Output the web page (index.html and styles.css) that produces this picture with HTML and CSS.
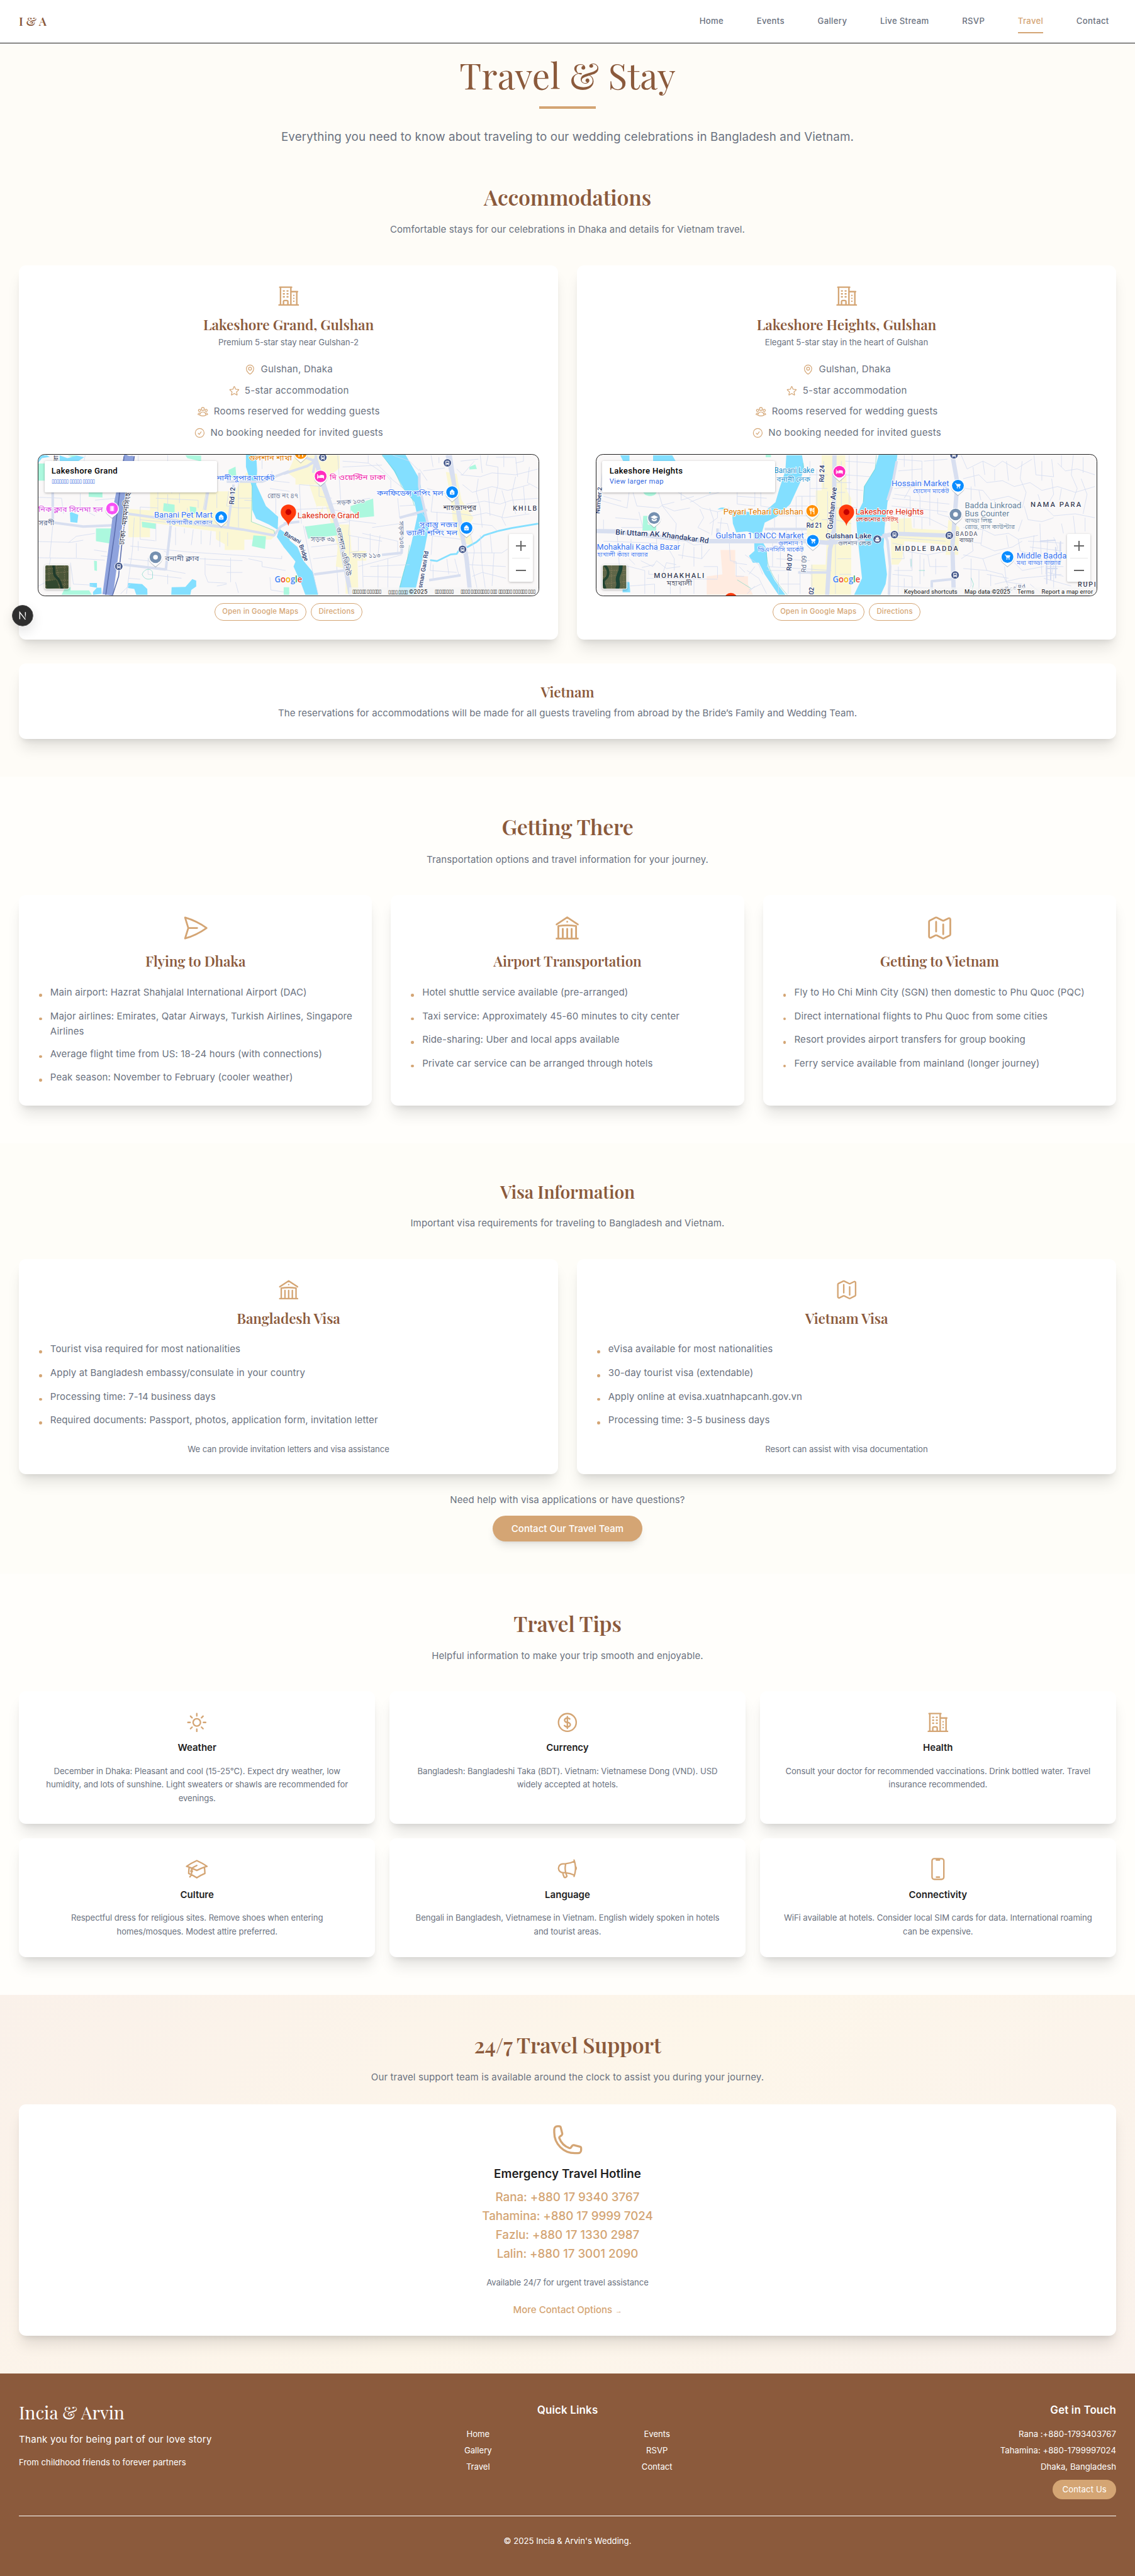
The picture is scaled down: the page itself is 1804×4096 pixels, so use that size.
FILE: index.html
```html
<!DOCTYPE html>
<html lang="en">
<head>
<meta charset="utf-8">
<title>Travel &amp; Stay | Incia &amp; Arvin</title>
<link rel="stylesheet" href="styles.css">
</head>
<body>
<svg class="sprite" aria-hidden="true">
  <symbol id="i-building" viewBox="0 0 24 24"><path d="M2.25 21h19.5m-18-18v18m10.5-18v18m6-13.5V21M6.75 6.75h.75m-.75 3h.75m-.75 3h.75m3-6h.75m-.75 3h.75m-.75 3h.75M6.75 21v-3.375c0-.621.504-1.125 1.125-1.125h2.25c.621 0 1.125.504 1.125 1.125V21M3 3h12m-.75 4.5H21m-3.75 3.75h.008v.008h-.008v-.008zm0 3h.008v.008h-.008v-.008zm0 3h.008v.008h-.008v-.008z"/></symbol>
  <symbol id="i-pin" viewBox="0 0 24 24"><path d="M15 10.5a3 3 0 11-6 0 3 3 0 016 0z"/><path d="M19.5 10.5c0 7.142-7.5 11.25-7.5 11.25S4.5 17.642 4.5 10.5a7.5 7.5 0 1115 0z"/></symbol>
  <symbol id="i-star" viewBox="0 0 24 24"><path d="M11.48 3.499a.562.562 0 011.04 0l2.125 5.111a.563.563 0 00.475.345l5.518.442c.499.04.701.663.321.988l-4.204 3.602a.563.563 0 00-.182.557l1.285 5.385a.562.562 0 01-.84.61l-4.725-2.885a.563.563 0 00-.586 0L6.982 20.54a.562.562 0 01-.84-.61l1.285-5.386a.562.562 0 00-.182-.557l-4.204-3.602a.563.563 0 01.321-.988l5.518-.442a.563.563 0 00.475-.345L11.48 3.5z"/></symbol>
  <symbol id="i-users" viewBox="0 0 24 24"><path d="M18 18.72a9.094 9.094 0 003.741-.479 3 3 0 00-4.682-2.72m.94 3.198l.001.031c0 .225-.012.447-.037.666A11.944 11.944 0 0112 21c-2.17 0-4.207-.576-5.963-1.584A6.062 6.062 0 016 18.719m12 0a5.971 5.971 0 00-.941-3.197m0 0A5.995 5.995 0 0012 12.75a5.995 5.995 0 00-5.058 2.772m0 0a3 3 0 00-4.681 2.72 8.986 8.986 0 003.74.477m.94-3.197a5.971 5.971 0 00-.94 3.197M15 6.75a3 3 0 11-6 0 3 3 0 016 0zm6 3a2.25 2.25 0 11-4.5 0 2.25 2.25 0 014.5 0zm-13.5 0a2.25 2.25 0 11-4.5 0 2.25 2.25 0 014.5 0z"/></symbol>
  <symbol id="i-check" viewBox="0 0 24 24"><path d="M9 12.75L11.25 15 15 9.75M21 12a9 9 0 11-18 0 9 9 0 0118 0z"/></symbol>
  <symbol id="i-plane" viewBox="0 0 24 24"><path d="M6 12L3.269 3.126A59.768 59.768 0 0121.485 12 59.77 59.77 0 013.27 20.876L5.999 12zm0 0h7.5"/></symbol>
  <symbol id="i-library" viewBox="0 0 24 24"><path d="M12 21v-8.25M15.75 21v-8.25M8.25 21v-8.25M3 9l9-6 9 6m-1.5 12V10.332A48.36 48.36 0 0012 9.75c-2.551 0-5.056.2-7.5.582V21M3 21h18M12 6.75h.008v.008H12V6.75z"/></symbol>
  <symbol id="i-map" viewBox="0 0 24 24"><path d="M9 6.75V15m6-6v8.25m.503 3.498l4.875-2.437c.381-.19.622-.58.622-1.006V4.82c0-.836-.88-1.38-1.628-1.006l-3.869 1.934c-.317.159-.69.159-1.006 0L9.503 3.252a1.125 1.125 0 00-1.006 0L3.622 5.689C3.24 5.88 3 6.27 3 6.695V19.18c0 .836.88 1.38 1.628 1.006l3.869-1.934c.317-.159.69-.159 1.006 0l4.994 2.497c.317.158.69.158 1.006 0z"/></symbol>
  <symbol id="i-sun" viewBox="0 0 24 24"><path d="M12 3v2.25m6.364.386l-1.591 1.591M21 12h-2.25m-.386 6.364l-1.591-1.591M12 18.75V21m-4.773-4.227l-1.591 1.591M5.25 12H3m4.227-4.773L5.636 5.636M15.75 12a3.75 3.75 0 11-7.5 0 3.75 3.75 0 017.5 0z"/></symbol>
  <symbol id="i-dollar" viewBox="0 0 24 24"><path d="M12 6v12m-3-2.818l.879.659c1.171.879 3.07.879 4.242 0 1.172-.879 1.172-2.303 0-3.182C13.536 12.219 12.768 12 12 12c-.725 0-1.45-.22-2.003-.659-1.106-.879-1.106-2.303 0-3.182s2.9-.879 4.006 0l.415.33M21 12a9 9 0 11-18 0 9 9 0 0118 0z"/></symbol>
  <symbol id="i-cap" viewBox="0 0 24 24"><path d="M4.26 10.147a60.436 60.436 0 00-.491 6.347A48.627 48.627 0 0112 20.904a48.627 48.627 0 018.232-4.41 60.46 60.46 0 00-.491-6.347m-15.482 0a50.57 50.57 0 00-2.658-.813A59.905 59.905 0 0112 3.493a59.902 59.902 0 0110.399 5.84c-.896.248-1.783.52-2.658.814m-15.482 0A50.697 50.697 0 0112 13.489a50.702 50.702 0 017.74-3.342M6.75 15a.75.75 0 100-1.5.75.75 0 000 1.5zm0 0v-3.675A55.378 55.378 0 0112 8.443m-7.007 11.55A5.981 5.981 0 006.75 15.75v-1.5"/></symbol>
  <symbol id="i-megaphone" viewBox="0 0 24 24"><path d="M10.34 15.84c-.688-.06-1.386-.09-2.09-.09H7.5a4.5 4.5 0 110-9h.75c.704 0 1.402-.03 2.09-.09m0 9.18c.253.962.584 1.892.985 2.783.247.55.06 1.21-.463 1.511l-.657.38c-.551.318-1.26.117-1.527-.461a20.845 20.845 0 01-1.44-4.282m3.102.069a18.03 18.03 0 01-.59-4.59c0-1.586.205-3.124.59-4.59m0 9.18a23.848 23.848 0 018.835 2.535M10.34 6.66a23.847 23.847 0 008.835-2.535m0 0A23.74 23.74 0 0018.795 3m.38 1.125a23.91 23.91 0 011.014 5.395m-1.014 8.855c-.118.38-.245.754-.38 1.125m.38-1.125a23.91 23.91 0 001.014-5.395m0-3.46c.495.413.811 1.035.811 1.73 0 .695-.316 1.317-.811 1.73m0-3.46a24.347 24.347 0 010 3.46"/></symbol>
  <symbol id="i-mobile" viewBox="0 0 24 24"><path d="M10.5 1.5H8.25A2.25 2.25 0 006 3.75v16.5a2.25 2.25 0 002.25 2.25h7.5A2.25 2.25 0 0018 20.25V3.75a2.25 2.25 0 00-2.25-2.25H13.5m-3 0V3h3V1.5m-3 0h3m-3 18.75h3"/></symbol>
  <symbol id="i-phone" viewBox="0 0 24 24"><path d="M2.25 6.75c0 8.284 6.716 15 15 15h2.25a2.25 2.25 0 002.25-2.25v-1.372c0-.516-.351-.966-.852-1.091l-4.423-1.106c-.44-.11-.902.055-1.173.417l-.97 1.293c-.282.376-.769.542-1.21.38a12.035 12.035 0 01-7.143-7.143c-.162-.441.004-.928.38-1.21l1.293-.97c.363-.271.527-.734.417-1.173L6.963 3.102a1.125 1.125 0 00-1.091-.852H4.5A2.25 2.25 0 002.25 4.5v2.25z"/></symbol>
  <!-- map markers, tip of the pin at 0,46 -->
  <symbol id="m-drop" viewBox="-40 -40 80 96"><path d="M0 47L-22 27A35 35 0 1 1 22 27Z" fill="#7b8794" opacity=".45" transform="translate(0 4)"/><path d="M0 46L-22 27A35 35 0 1 1 22 27Z" fill="#fff"/></symbol>
  <symbol id="m-bag" viewBox="-16 -16 32 32"><path d="M-11 -5H11V12H-11ZM-6 -5V-7A6 6 0 0 1 6 -7V-5" fill="#fff" stroke="#fff" stroke-width="3"/><path d="M-5 2A5 5 0 0 0 5 2" fill="none" stroke="#0a8cff" stroke-width="3"/></symbol>
  <symbol id="m-cart" viewBox="-16 -16 32 32"><path d="M-15 -12H-10L-4 4H10L14 -8H-8" fill="#fff" stroke="#fff" stroke-width="3"/><circle cx="-3" cy="11" r="3.5" fill="#fff"/><circle cx="9" cy="11" r="3.5" fill="#fff"/></symbol>
  <symbol id="m-bed" viewBox="-18 -16 36 32"><path d="M-16 -11V12M-16 6H16M16 12V-3H-2V6" fill="none" stroke="#fff" stroke-width="4"/><path d="M-2 -7H10Q16 -7 16 -1V4H-2Z" fill="#fff"/><circle cx="-9" cy="-1" r="4" fill="#fff"/></symbol>
  <symbol id="m-bus" viewBox="-24 -24 48 48"><circle r="23" fill="#fff"/><circle r="20" fill="#46598c"/><rect x="-10" y="-11" width="20" height="20" rx="4" fill="#fff"/><rect x="-7" y="-7" width="14" height="7" fill="#46598c"/><path d="M-8 9V13M8 9V13" stroke="#fff" stroke-width="4"/><circle cx="-5" cy="5" r="2" fill="#46598c"/><circle cx="5" cy="5" r="2" fill="#46598c"/></symbol>
</svg>

<header class="topbar">
  <a class="logo">I &amp; A</a>
  <nav class="nav"><a>Home</a><a>Events</a><a>Gallery</a><a>Live Stream</a><a>RSVP</a><a class="active">Travel</a><a>Contact</a></nav>
</header>

<main>
<section class="hero">
  <h1>Travel &amp; Stay</h1>
  <span class="rule"></span>
  <p>Everything you need to know about traveling to our wedding celebrations in Bangladesh and Vietnam.</p>
</section>

<section class="section stays">
  <h2>Accommodations</h2>
  <p class="lead">Comfortable stays for our celebrations in Dhaka and details for Vietnam travel.</p>
  <div class="grid two">
    <article class="card hotel">
      <svg class="icon"><use href="#i-building"/></svg>
      <h3>Lakeshore Grand, Gulshan</h3>
      <p class="small">Premium 5-star stay near Gulshan-2</p>
      <ul class="facts">
        <li><svg class="mini"><use href="#i-pin"/></svg>Gulshan, Dhaka</li>
        <li><svg class="mini"><use href="#i-star"/></svg>5-star accommodation</li>
        <li><svg class="mini"><use href="#i-users"/></svg>Rooms reserved for wedding guests</li>
        <li><svg class="mini"><use href="#i-check"/></svg>No booking needed for invited guests</li>
      </ul>
      <div class="map">
        <svg class="tiles" viewBox="0 0 2544 720" preserveAspectRatio="none">
          <g transform="translate(-42 -27)">
            <path class="district" d="M610 215H1040L1100 120L1180 135V170H1130V370L1245 415L1250 440L1225 462H1090V515H990V485L945 460V420L610 375V450H500V305L610 312Z"/>
            <path class="park" d="M42 72H75V160H42ZM190 30H240L220 42ZM298 218H368V246L298 243ZM790 30L870 32V62L800 45ZM1010 105L1045 88L1050 150L1008 140ZM680 275L735 283V325L676 315ZM812 292L845 297V330L815 325ZM568 370L640 380V408L570 398ZM335 405H418L408 482L335 470ZM1136 440L1200 445L1195 510L1128 495ZM325 570L340 572V622L327 620ZM180 705L206 706V722H300L314 745H160Z"/>
            <path class="water" d="M42 30H85L100 38L60 45L42 68ZM150 30L190 45L240 32L275 40L245 60H150ZM202 318L245 335L240 376L205 372ZM1098 28H1150L1155 110L1150 180L1200 290L1262 345L1260 400L1300 430L1320 440V530L1290 500L1255 448L1265 415L1215 385L1150 355L1130 310L1128 190L1098 90ZM303 684H340V708L303 702ZM340 708H362L364 740L320 745V730ZM498 684L570 690L596 715L597 745H540L530 715L498 710ZM720 706L790 704L825 664L845 672V702L820 720L815 745H718Z"/>
            <path class="street" d="M42 245L160 250L170 330M110 220L117 370L100 555M42 472L210 476L270 465M235 480V555M42 555L235 558L380 567M195 478L235 445L330 430M205 580L220 690L320 695M42 700L80 680L105 555M255 225V300L330 340M330 260L440 250M325 515L390 525M360 545L400 548M280 30L270 85M550 30V60L700 75V30M610 210L650 220V300L560 295V460L635 468M640 250L855 260V300M700 230V290M760 225V275M800 300V330M560 360L1060 410M530 350L520 520L490 740M715 395V440L690 620M740 400V490M785 405V430M830 410L820 490M870 415V485M920 418L915 490M965 420V500M1005 425V495M640 380V470M510 495L800 525L1100 545M550 470V520M500 560L640 575M680 520L700 530M895 220L880 310M950 230V300M1010 215L1000 290L1060 300M1060 170V400M1060 250H1130M1060 300H1120M890 555V640L905 680L1000 685M895 590L1020 600V555M1020 600V680M1000 630H1080M1100 545L1280 560V545M1110 560L1180 575V600L1300 620M1045 680L1060 735M1220 655L1225 720L1320 735M950 700L1000 690M860 560L1080 570M590 600L790 635M600 640L770 660M700 640V690M1180 30V100M1230 110V160L1320 170M1220 200L1320 215M1250 240V330M600 555V640M500 660L560 665M460 740L510 690M1090 260L1130 262M650 350V300M720 225V190"/>
            <path class="road" d="M115 220V370M120 375L270 395L440 388M500 330L1080 410L1240 440L1275 395L1320 370M890 310L905 215M715 390L690 620M475 590L690 615M1320 110L1180 165L1000 165M1035 180L1005 400"/>
            <path class="trail" d="M1130 180L1125 370L1240 415L1245 432M570 640C580 610 615 605 623 630V660C600 670 580 665 570 640Z"/>
            <path class="highway" d="M505 30L455 270L440 400L395 745"/>
            <path class="highway-line" d="M478 35L430 430L385 745M530 35L490 300L465 500L450 650L420 745"/>
            <text class="lb dark" transform="translate(142 60) rotate(-88)" font-size="34">রা</text>
            <text class="lb pink" x="42" y="320" font-size="38" textLength="328" lengthAdjust="spacingAndGlyphs">নিক ক্লাব সিনেমা হল</text>
            <text class="lb slate" x="44" y="388" font-size="36" textLength="78" lengthAdjust="spacingAndGlyphs">সরণী</text>
            <text class="lb blue" x="950" y="160" font-size="38" textLength="294" lengthAdjust="spacingAndGlyphs">নানী সুপার মার্কেট</text>
            <text class="lb orange" x="1112" y="56" font-size="38" textLength="220" lengthAdjust="spacingAndGlyphs">গুলশান শাখা</text>
            <text class="lb blue" x="631" y="350" font-size="39" textLength="298" lengthAdjust="spacingAndGlyphs">Banani Pet Mart</text>
            <text class="lb blue thin" x="692" y="385" font-size="33" textLength="235" lengthAdjust="spacingAndGlyphs">পশুপাখীর দোকান</text>
            <text class="lb slate" x="685" y="570" font-size="37" textLength="175" lengthAdjust="spacingAndGlyphs">বনানী ক্লাব</text>
            <text class="lb dark" transform="translate(478 490) rotate(-83)" font-size="38" textLength="270" lengthAdjust="spacingAndGlyphs">ঢাকা - ময়মনসিংহ</text>
            <text class="lb navy" transform="translate(1037 282) rotate(-86)" font-size="34">Rd 12</text>
            <text class="lb slate thin" x="1208" y="248" font-size="34" textLength="156" lengthAdjust="spacingAndGlyphs">রোড নং ৪৭</text>
            <use href="#m-drop" x="377" y="265" width="80" height="96"/><circle cx="417" cy="303" r="30" fill="#f74ff5"/><path d="M406 289H428V317H406ZM411 289V317M423 289V317" fill="#fff" stroke="#f74ff5" stroke-width="2"/>
            <use href="#m-drop" x="932" y="309" width="80" height="96"/><circle cx="972" cy="347" r="30" fill="#0a8cff"/><use href="#m-bag" x="957" y="332" width="30" height="30"/>
            <use href="#m-drop" x="598" y="514" width="80" height="96"/><circle cx="638" cy="552" r="30" fill="#7590b0"/><circle cx="638" cy="552" r="12" fill="#fff"/>
            <use href="#m-bus" x="428" y="576" width="46" height="46"/>
            <g transform="translate(507 12)"><circle r="22" fill="#fff" stroke="#99a"/></g>
          </g>
          <g transform="translate(1248 -27)">
            <path class="district" d="M60 30H285V95L230 140L200 180H60V150L20 120ZM200 180L260 385H335L345 520H420V570H375L380 740H315V610L265 600L275 500L215 290H170V330L200 320ZM825 115L880 125L905 260L965 350L935 400L965 490L905 480L860 360L850 250ZM130 180L190 190L215 260L180 330Z"/>
            <path class="park" d="M340 290L455 252L460 343L385 350L340 310ZM108 395L265 375L272 440L125 457ZM945 90L975 77L983 100L945 103ZM0 706H28V745H0Z"/>
            <path class="water" d="M500 28H620L690 150L720 310L738 400L715 520L665 745H578L650 480L680 340L665 270L610 200L560 110ZM0 440L70 500L100 570L150 630L175 745H110L90 690L50 600L60 575L0 500Z"/>
            <path class="creek" d="M745 567L780 572L850 538L880 535L900 505L935 500L980 475L1020 440L1090 418L1160 403L1295 380"/>
            <path class="street" d="M275 30L290 260M300 90L500 80M300 60L430 70V30M430 70L520 130L545 160V240M470 70L550 150M540 145L610 200M80 180L200 190M80 180L90 380M0 310L235 300M180 160V240L245 250M245 280L440 250M255 310L310 320V360L470 380M100 390L150 640L175 740M108 395L125 460M265 380L335 370M340 310L330 440L500 470M335 440V540M380 450V520L335 530M440 430V530M490 440L480 540M400 430L580 470V540M580 250L590 350L680 335M590 290L665 285M450 400L590 380M400 540L405 740M405 650L600 655M480 590V740M440 600L640 590M530 560V740M140 500L310 480M150 560L270 545M270 600L280 740M320 620L330 730M380 600L600 540M555 30L640 60L690 110M690 100L730 160M710 110L820 95M700 320L760 400L750 540M730 200L870 240M760 230L750 320L880 330M780 320V410L870 420M740 440L900 460M750 570L745 620L880 630M740 670L900 640M760 590V660M830 560L840 640M870 560L890 640M900 130L1000 140L1060 120L1180 130L1295 100M910 180L960 220L1060 190L1140 210L1250 180M930 280L1020 265L1100 280L1160 260L1295 250M900 330L960 340L1030 325L1120 350L1250 330M960 380L1060 390L1090 420M1000 30L1010 120M1040 30L1030 80L1090 90V180L1070 270M1080 40H1180L1190 140M1120 30V90M1220 30V60L1180 70M1250 90L1240 170L1295 200M990 150L980 220L1000 300L1010 400M1040 200L1050 340M1110 210L1130 280L1110 350L1130 390M1180 140L1160 230L1180 330M1220 190L1230 330M950 430L970 520L960 600L990 740M930 530L1110 530L1140 510M1000 440L1010 600M1050 430L1060 530M940 590L1130 600M960 650L1010 630L1130 660M1070 530L1060 700M1010 600L1030 740M880 100L910 130L970 60M900 60L990 50M750 30L760 90M790 40V70"/>
            <path class="road" d="M0 125L120 85L160 60L190 170L265 370L300 500L340 745M80 30L160 60M165 30L150 120M830 30L880 250L905 400L935 560L950 745M155 640L310 620M500 540L600 530L605 370M590 350L730 310M690 120V190L735 390M740 670L900 645M0 380L80 370"/>
            <path class="road wide" d="M160 45L200 170L240 290L275 400L340 740M845 30L870 200L895 360L930 560L950 745"/>
            <path class="trail" d="M500 30L565 110L600 190L655 255L665 290M640 490L630 560L605 650L582 745"/>
            <text class="lb magenta" x="234" y="156" font-size="38" textLength="284" lengthAdjust="spacingAndGlyphs">দি ওয়েস্টিন ঢাকা</text>
            <text class="lb blue" x="474" y="235" font-size="37" textLength="338" lengthAdjust="spacingAndGlyphs">কনফিডেন্স শপিং মল</text>
            <text class="lb blue" x="692" y="398" font-size="37" textLength="192" lengthAdjust="spacingAndGlyphs">সুবাস্তু নজর</text>
            <text class="lb blue" x="624" y="440" font-size="37" textLength="260" lengthAdjust="spacingAndGlyphs">ভ্যালী শপিং মল</text>
            <text class="lb dark" x="812" y="312" font-size="36" textLength="168" lengthAdjust="spacingAndGlyphs">শাহজাদপুর</text>
            <text class="lb dark bold" x="1166" y="315" font-size="34" textLength="122">KHILB</text>
            <text class="lb slate thin" x="270" y="280" font-size="34" textLength="142" lengthAdjust="spacingAndGlyphs" transform="rotate(-4 340 270)">সড়ক ১০৩</text>
            <text class="lb slate thin" x="138" y="472" font-size="34" textLength="122" lengthAdjust="spacingAndGlyphs">সড়ক ৩৯</text>
            <text class="lb slate thin" x="350" y="556" font-size="34" textLength="142" lengthAdjust="spacingAndGlyphs">সড়ক ১১৩</text>
            <text class="lb slate thin" transform="translate(586 368) rotate(88)" font-size="34" textLength="140" lengthAdjust="spacingAndGlyphs">সড়ক ১০৪</text>
            <text class="lb slate" transform="translate(266 400) rotate(78)" font-size="36" textLength="255" lengthAdjust="spacingAndGlyphs">গুলশান এভিনিউ</text>
            <text class="lb navy" transform="translate(0 438) rotate(30)" font-size="30">Banani</text>
            <text class="lb navy" transform="translate(78 492) rotate(70)" font-size="30">Bridge</text>
            <text class="lb navy" transform="translate(704 712) rotate(-80)" font-size="31">sman Gani Rd</text>
            <text class="lb red" x="70" y="353" font-size="39" textLength="314" lengthAdjust="spacingAndGlyphs">Lakeshore Grand</text>
            <use href="#m-drop" x="148" y="100" width="80" height="96"/><circle cx="188" cy="138" r="30" fill="#ff2dbd"/><use href="#m-bed" x="170" y="122" width="36" height="32"/>
            <use href="#m-drop" x="47" y="-19" width="80" height="96"/><circle cx="87" cy="19" r="30" fill="#ff8f00"/><path d="M78 24V38M96 24V38" stroke="#fff" stroke-width="5"/>
            <use href="#m-drop" x="817" y="181" width="80" height="96"/><circle cx="857" cy="219" r="30" fill="#0a8cff"/><use href="#m-bag" x="842" y="204" width="30" height="30"/>
            <use href="#m-drop" x="890" y="364" width="80" height="96"/><circle cx="930" cy="402" r="30" fill="#0a8cff"/><use href="#m-bag" x="915" y="387" width="30" height="30"/>
            <use href="#m-bus" x="176" y="18" width="46" height="46"/><use href="#m-bus" x="810" y="46" width="46" height="46"/><use href="#m-bus" x="887" y="489" width="46" height="46"/>
            <path d="M24 393C20 362 -15 355 -15 321A39 39 0 1 1 63 321C63 355 28 362 24 393Z" fill="#ff3b0d"/><circle cx="24" cy="321" r="15" fill="#c40000"/>
            <text class="google" x="-46" y="680" textLength="140" lengthAdjust="spacingAndGlyphs"><tspan fill="#4285f4">G</tspan><tspan fill="#ea4335">o</tspan><tspan fill="#f4b400">o</tspan><tspan fill="#4285f4">g</tspan><tspan fill="#34a853">l</tspan><tspan fill="#ea4335">e</tspan></text>
          </g>
        </svg>
        <div class="place"><b>Lakeshore Grand</b><span class="boxes">▯▯▯▯▯▯▯ ▯▯▯▯▯ ▯▯▯▯▯</span></div>
        <svg class="sat" viewBox="0 0 38 38"><rect width="38" height="38" fill="#4a5638"/><path d="M0 6L38 2M0 14L38 10M0 24H38M6 0V38M18 0L24 38M31 0V38M0 33L38 30" stroke="#6d6b4c" stroke-width="1.6" stroke-dasharray="2 1.5"/><path d="M13 0C16 10 12 14 18 19S24 29 27 38" stroke="#1f3b2c" stroke-width="4" fill="none"/><path d="M0 26L18 23L22 36L3 38Z" fill="#31482f"/></svg>
        <div class="zoomer"><i></i><i class="minus"></i></div>
        <div class="legal boxes"><span>▯▯▯▯▯▯ ▯▯▯▯▯▯</span><span>▯▯▯▯ ▯▯▯▯<em>©2025</em></span><span>▯▯▯▯▯▯▯▯</span><span>▯▯▯▯ ▯▯▯▯▯▯▯▯ ▯▯▯ ▯▯▯▯▯▯ ▯▯▯▯▯▯ ▯▯▯</span></div>
      </div>
      <div class="chips"><a>Open in Google Maps</a><a>Directions</a></div>
    </article>

    <article class="card hotel">
      <svg class="icon"><use href="#i-building"/></svg>
      <h3>Lakeshore Heights, Gulshan</h3>
      <p class="small">Elegant 5-star stay in the heart of Gulshan</p>
      <ul class="facts">
        <li><svg class="mini"><use href="#i-pin"/></svg>Gulshan, Dhaka</li>
        <li><svg class="mini"><use href="#i-star"/></svg>5-star accommodation</li>
        <li><svg class="mini"><use href="#i-users"/></svg>Rooms reserved for wedding guests</li>
        <li><svg class="mini"><use href="#i-check"/></svg>No booking needed for invited guests</li>
      </ul>
      <div class="map">
        <svg class="tiles" viewBox="0 0 2544 720" preserveAspectRatio="none">
          <g transform="translate(-24 -27)">
            <path class="district" d="M1170 30H1290V60L1300 215L1320 250V745H1115V590H1190L1195 480H1095V370L1140 330V210H1170Z"/>
            <path class="peach" d="M655 515H730V645L795 650V690L820 745H585V650L665 640Z"/>
            <path class="park" d="M262 340H285V385L328 392V416H258ZM262 218H330C325 246 270 246 262 218ZM885 28H912V40H885Z"/>
            <path class="water" d="M145 30H192V60H160ZM312 30H410L427 60H312ZM990 30H1070L1080 90L1060 170L1010 280L940 345L880 375L865 430L870 475L890 510L895 600L930 670L985 745H950L880 640L850 580L820 580L800 545L828 520L825 430L790 420L735 425L718 380L715 335L690 305L640 307C660 290 680 298 700 310L800 320L805 337L840 335L890 310L935 270L955 200L985 110ZM595 218H612L600 224ZM157 675L192 680L196 732H157Z"/>
            <path class="street" d="M60 60L40 260L180 300L190 220M60 240L150 265M210 220L230 290L340 300L360 285L420 270M340 220L360 290L430 380L425 440M360 290L420 315L500 300M440 220L520 270L560 300L640 320L700 300M455 220V260L520 240M500 270L590 235L650 220M550 305L570 350L540 400L600 430M600 300L620 360L610 440M640 320V350L600 380M660 350L650 440M700 420L690 380L640 375M740 220V280L830 290V220M740 240L890 250M860 220V290L930 300M120 350L240 360M240 320L260 400L150 400M60 360V410M130 440L140 590M60 470L330 480M330 455V520L440 500V440M200 460V520M380 490L420 560M250 570L310 600L330 570L380 610L450 600M255 605L320 590M290 620V640L360 640L380 580L430 590M420 560V620M440 450L520 490L600 480M470 480L460 560M520 500V600M560 490V560M600 510L560 560L440 540M140 590L190 600L270 620V740M190 560L220 590M190 700L320 690V740M280 660L640 665M400 690V740M450 670V740M520 660V740M570 600L640 600V660M700 480L705 570L735 575V650H775M720 580L790 590M750 600L780 630M780 540L850 590L870 640M790 620L850 660L890 740M800 640L830 600M830 700L790 740M860 690L800 720M920 400V600M920 470V440M960 480V600M990 410V450M1070 410V600L1115 640M1070 340V240M1045 240H1140M1040 240V410M1110 60V350M1145 100V330M1110 130H1200M1110 200H1200M1000 290H1110M950 340H1110M930 345V400M930 440L1095 430M940 560L1110 570M890 600L1220 620M890 620H1000M950 640V740M1000 620V740M1060 620V740M960 690H1060M1120 590V740M1240 470V740M1250 560H1320M1260 640H1320M1240 360L1320 380M1240 300H1320M1240 220H1290M1270 60V330M1240 170H1320M1170 360H1210M1200 215V470M1180 60V200"/>
            <path class="road" d="M600 470L870 468L1200 475L1320 465M880 408H1095M1050 630H1200M1210 470C1210 450 1225 440 1225 420M640 405L640 430"/>
            <path class="road wide" d="M24 418L120 420L360 450L600 470H1100L1200 478L1320 468M1235 30L1232 440L1212 510L1198 745"/>
            <path class="trail" d="M888 520C890 600 920 660 995 745M1076 70V100M740 668L810 712"/>
            <text class="lb navy" transform="translate(40 330) rotate(-85)" font-size="31">Number 2</text>
            <text class="lb sky" x="928" y="121" font-size="39" textLength="204" lengthAdjust="spacingAndGlyphs">Banani Lake</text>
            <text class="lb sky thin" x="940" y="165" font-size="36" textLength="172" lengthAdjust="spacingAndGlyphs">বনানী লেক</text>
            <text class="lb orange" x="670" y="334" font-size="39" textLength="406" lengthAdjust="spacingAndGlyphs">Peyari Tehari Gulshan</text>
            <text class="lb blue" x="631" y="454" font-size="39" textLength="449" lengthAdjust="spacingAndGlyphs">Gulshan 1 DNCC Market</text>
            <text class="lb blue thin" x="948" y="490" font-size="31" textLength="130" lengthAdjust="spacingAndGlyphs">গুলশান 1</text>
            <text class="lb blue thin" x="846" y="524" font-size="31" textLength="232" lengthAdjust="spacingAndGlyphs">ডিএনসিসি মার্কেট</text>
            <text class="lb navy" transform="translate(120 436) rotate(3)" font-size="38" textLength="225" lengthAdjust="spacingAndGlyphs">Bir Uttam AK</text>
            <text class="lb navy" transform="translate(356 448) rotate(8)" font-size="38" textLength="240" lengthAdjust="spacingAndGlyphs">Khandakar Rd</text>
            <text class="lb blue" x="26" y="514" font-size="39" textLength="424" lengthAdjust="spacingAndGlyphs">Mohakhali Kacha Bazar</text>
            <text class="lb blue thin" x="28" y="548" font-size="32" textLength="258" lengthAdjust="spacingAndGlyphs">হাখালী কাঁচা বাজার</text>
            <text class="lb dark bold" x="316" y="657" font-size="37" textLength="256">MOHAKHALI</text>
            <text class="lb dark thin" x="382" y="696" font-size="34" textLength="128" lengthAdjust="spacingAndGlyphs">মহাখালী</text>
            <text class="lb navy" x="1092" y="401" font-size="33" textLength="80" lengthAdjust="spacingAndGlyphs">Rd 21</text>
            <text class="lb navy" transform="translate(1181 168) rotate(-88)" font-size="34">Rd 24</text>
            <text class="lb navy" transform="translate(1015 622) rotate(-86)" font-size="34">Rd 07</text>
            <text class="lb slate" transform="translate(1090 630) rotate(-88)" font-size="34">Rd 09</text>
            <text class="lb navy" transform="translate(1128 745) rotate(-86)" font-size="34">02</text>
            <text class="lb navy" transform="translate(1224 410) rotate(-84)" font-size="37" textLength="216" lengthAdjust="spacingAndGlyphs">Gulshan Ave</text>
            <use href="#m-drop" x="277" y="313" width="80" height="96"/><circle cx="317" cy="351" r="30" fill="#7590b0"/><path d="M299 347L318 337L338 347L318 357ZM305 354V362Q318 374 331 362V354L318 361Z" fill="#fff"/>
            <use href="#m-drop" x="1082" y="277" width="80" height="96"/><circle cx="1122" cy="315" r="30" fill="#ff8f00"/><path d="M1110 300V310Q1115 318 1120 310V300M1115 300V332M1131 332V300Q1124 304 1125 318H1131" fill="none" stroke="#fff" stroke-width="4"/>
            <use href="#m-drop" x="1085" y="430" width="80" height="96"/><circle cx="1125" cy="468" r="30" fill="#0a8cff"/><use href="#m-cart" x="1110" y="453" width="30" height="30"/>
            <use href="#m-drop" x="1220" y="76" width="80" height="96"/><circle cx="1260" cy="114" r="30" fill="#ff2dbd"/><use href="#m-bed" x="1242" y="98" width="36" height="32"/>
            <circle cx="708" cy="768" r="33" fill="#ff3b0d"/>
          </g>
          <g transform="translate(1266 -27)">
            <path class="district" d="M230 360L335 350L340 405L520 415L525 360L580 400L575 540H510L515 490L420 480L300 470L290 560L270 590H235Z"/>
            <path class="water" d="M170 28H265L250 150L215 270L200 400L195 500L212 640L205 690L180 745H45L85 660L70 520L60 420L55 340L90 270L95 190L150 100Z"/>
            <path class="street" d="M0 60L150 70M0 130L130 140M0 200L90 210M20 30V280M60 30V330M0 290L60 300M265 50L390 60V180L520 190M270 110L390 100M300 30V90M340 30V180L300 250M400 60L520 50M450 30V180M250 200L350 190L380 240M240 250L530 280M235 290L520 320M250 230L330 240V330M380 240V340M430 200V390M470 250V330L540 350M230 330L420 350L520 400M270 350V420M300 340V430M350 350V400M390 350V410M235 450L510 470M240 480L290 490L300 560L235 560M300 520L420 540L520 520M340 520V620L250 620M380 540V690M420 540L430 600H520M330 560L335 610M240 640L340 650V740M270 600V740M300 660V740M400 560V650M460 560V640M230 700L430 710M590 30L620 100L700 60L760 90L800 60L870 100L950 50M600 150L680 130L720 170L800 160L860 190L940 170L1000 210L1080 190L1170 220L1270 190M610 200L700 210L740 260L830 240L900 270M900 60L890 150L920 220L900 300M960 30L970 130L1060 140L1050 50M1000 60V160M1080 70L1120 110L1180 100L1270 130M1100 30V90M1160 30L1150 130L1180 200L1160 260M1210 40V120M1050 150L1060 230L1020 300L1060 340L1170 330L1270 350M980 230L990 260M1100 200L1090 260M1200 150L1230 230L1210 330M910 290L930 360L1000 370L1060 350M700 60L710 130M650 90L660 190M760 100V160M820 60L830 160M640 190V260M680 210L690 260M760 260V330M600 400L700 410L760 440L830 430L880 460L980 440M640 420L650 520L590 560M700 410L690 490L760 520L850 500L900 470M820 440L830 500M590 470L690 480M600 540L700 560L790 530M700 560L720 620L800 640L830 700M600 610L720 620M640 560V700L600 740M680 620V740M740 640V700M810 600L820 680L900 690M760 690L890 660L1000 650L1100 640M860 580L900 620L1010 600M880 460L890 520L960 540M930 470L1110 480M940 500L1100 520M960 440L950 560M990 380L1000 640M1030 460L1020 640M1060 450L1080 500L1050 640M1090 480V580M1020 600H1110M1020 570H1100M1030 630L1110 650M1010 660L1150 700M1060 640V720M940 690L1000 740M1100 380L1110 430M1160 340L1170 430M1220 350V420M900 360L880 420M870 690V740M720 640L830 660"/>
            <path class="street thick" d="M1025 540V690M1045 540V670M1070 500V660M1095 470V580M990 470L1070 465M1020 610H1080"/>
            <path class="road" d="M180 450L240 435L530 440M215 260L240 180L262 60M200 430L215 470L228 600L222 745M440 745V675L540 665M0 480L100 465"/>
            <path class="road wide" d="M545 30L570 170L558 330L545 500L552 745M190 445L250 432L545 442"/>
            <path class="trail" d="M158 30L152 100L97 190L92 270M375 620H405M640 658L652 690L645 720M335 560V600"/>
            <text class="lb blue" x="235" y="189" font-size="39" textLength="293" lengthAdjust="spacingAndGlyphs">Hossain Market</text>
            <text class="lb blue thin" x="344" y="224" font-size="32" textLength="184" lengthAdjust="spacingAndGlyphs">হোসেন মার্কেট</text>
            <text class="lb gray" x="608" y="300" font-size="39" textLength="288" lengthAdjust="spacingAndGlyphs">Badda Linkroad</text>
            <text class="lb gray" x="608" y="342" font-size="39" textLength="226" lengthAdjust="spacingAndGlyphs">Bus Counter</text>
            <text class="lb gray thin" x="608" y="374" font-size="31" textLength="138" lengthAdjust="spacingAndGlyphs">বাড্ডা লিঙ্ক</text>
            <text class="lb gray thin" x="608" y="406" font-size="31" textLength="255" lengthAdjust="spacingAndGlyphs">রোড, বাস কাউন্টার</text>
            <text class="lb dark bold" x="943" y="294" font-size="36" textLength="256">NAMA PARA</text>
            <text class="lb dark bold" x="252" y="519" font-size="36" textLength="322">MIDDLE BADDA</text>
            <text class="lb dark" x="562" y="444" font-size="29" textLength="110">BADDA</text>
            <text class="lb dark thin" x="580" y="474" font-size="29" textLength="72" lengthAdjust="spacingAndGlyphs">বাড্ডা</text>
            <text class="lb blue" x="871" y="557" font-size="39" textLength="255" lengthAdjust="spacingAndGlyphs">Middle Badda</text>
            <text class="lb blue thin" x="871" y="590" font-size="31" textLength="225" lengthAdjust="spacingAndGlyphs">মধ্য বাড্ডা বাজার</text>
            <text class="lb navy" x="-101" y="457" font-size="38" textLength="234" lengthAdjust="spacingAndGlyphs">Gulshan Lake</text>
            <text class="lb slate thin" x="-38" y="490" font-size="32" textLength="170" lengthAdjust="spacingAndGlyphs">গুলশান লেক</text>
            <text class="lb red" x="52" y="334" font-size="39" textLength="347" lengthAdjust="spacingAndGlyphs">Lakeshore Heights</text>
            <text class="lb red thin" x="54" y="368" font-size="32" textLength="215" lengthAdjust="spacingAndGlyphs">লেকশোর হাইটস্</text>
            <text class="lb slate" transform="translate(715 745) rotate(-10)" font-size="29" textLength="205">Post Office Rd</text>
            <text class="lb dark bold" x="1183" y="702" font-size="34" textLength="92">RUPI</text>
            <use href="#m-drop" x="533" y="148" width="80" height="96"/><circle cx="573" cy="186" r="30" fill="#0a8cff"/><use href="#m-cart" x="558" y="171" width="30" height="30"/>
            <use href="#m-drop" x="521" y="295" width="80" height="96"/><circle cx="561" cy="333" r="30" fill="#7590b0"/><circle cx="561" cy="333" r="12" fill="#fff"/>
            <use href="#m-drop" x="785" y="513" width="80" height="96"/><circle cx="825" cy="551" r="30" fill="#0a8cff"/><use href="#m-cart" x="810" y="536" width="30" height="30"/>
            <use href="#m-bus" x="530" y="5" width="46" height="46"/><use href="#m-bus" x="227" y="413" width="46" height="46"/><use href="#m-bus" x="506" y="417" width="46" height="46"/><use href="#m-bus" x="536" y="620" width="46" height="46"/>
            <circle cx="163" cy="460" r="22" fill="#fff"/><circle cx="163" cy="460" r="20" fill="#46598c"/><path d="M151 462H175L171 471H155ZM156 452H170V459H156ZM163 446V454" fill="#fff" stroke="#fff" stroke-width="2"/>
            <path d="M6 393C2 362 -33 355 -33 321A39 39 0 1 1 45 321C45 355 10 362 6 393Z" fill="#ff3b0d"/><circle cx="6" cy="321" r="15" fill="#c40000"/>
            <text class="google" x="-64" y="680" textLength="140" lengthAdjust="spacingAndGlyphs"><tspan fill="#4285f4">G</tspan><tspan fill="#ea4335">o</tspan><tspan fill="#f4b400">o</tspan><tspan fill="#4285f4">g</tspan><tspan fill="#34a853">l</tspan><tspan fill="#ea4335">e</tspan></text>
          </g>
        </svg>
        <div class="place"><b>Lakeshore Heights</b><span>View larger map</span></div>
        <svg class="sat" viewBox="0 0 38 38"><rect width="38" height="38" fill="#5f6648"/><path d="M0 8H38M0 18L38 15M0 30L38 26M14 0V38M34 0V38" stroke="#7a7656" stroke-width="1.6" stroke-dasharray="2 1.5"/><path d="M3 0C12 8 9 18 4 22S2 30 4 38" stroke="#234431" stroke-width="4" fill="none"/><path d="M29 0C30 12 24 14 24 22S27 30 23 38" stroke="#1d4536" stroke-width="6" fill="none"/></svg>
        <div class="zoomer"><i></i><i class="minus"></i></div>
        <div class="legal"><span>Keyboard shortcuts</span><span>Map data ©2025</span><span>Terms</span><span>Report a map error</span></div>
      </div>
      <div class="chips"><a>Open in Google Maps</a><a>Directions</a></div>
    </article>
  </div>
  <article class="card note">
    <h3>Vietnam</h3>
    <p>The reservations for accommodations will be made for all guests traveling from abroad by the Bride’s Family and Wedding Team.</p>
  </article>
</section>

<section class="section light">
  <h2>Getting There</h2>
  <p class="lead">Transportation options and travel information for your journey.</p>
  <div class="grid three wide-gap">
    <article class="card route">
      <svg class="icon lg"><use href="#i-plane"/></svg>
      <h3>Flying to Dhaka</h3>
      <ul class="bullets">
        <li>Main airport: Hazrat Shahjalal International Airport (DAC)</li>
        <li>Major airlines: Emirates, Qatar Airways, Turkish Airlines, Singapore Airlines</li>
        <li>Average flight time from US: 18-24 hours (with connections)</li>
        <li>Peak season: November to February (cooler weather)</li>
      </ul>
    </article>
    <article class="card route">
      <svg class="icon lg"><use href="#i-library"/></svg>
      <h3>Airport Transportation</h3>
      <ul class="bullets">
        <li>Hotel shuttle service available (pre-arranged)</li>
        <li>Taxi service: Approximately 45-60 minutes to city center</li>
        <li>Ride-sharing: Uber and local apps available</li>
        <li>Private car service can be arranged through hotels</li>
      </ul>
    </article>
    <article class="card route">
      <svg class="icon lg"><use href="#i-map"/></svg>
      <h3>Getting to Vietnam</h3>
      <ul class="bullets">
        <li>Fly to Ho Chi Minh City (SGN) then domestic to Phu Quoc (PQC)</li>
        <li>Direct international flights to Phu Quoc from some cities</li>
        <li>Resort provides airport transfers for group booking</li>
        <li>Ferry service available from mainland (longer journey)</li>
      </ul>
    </article>
  </div>
</section>

<section class="section">
  <h2 class="sm">Visa Information</h2>
  <p class="lead">Important visa requirements for traveling to Bangladesh and Vietnam.</p>
  <div class="grid two">
    <article class="card visa">
      <svg class="icon"><use href="#i-library"/></svg>
      <h3>Bangladesh Visa</h3>
      <ul class="bullets">
        <li>Tourist visa required for most nationalities</li>
        <li>Apply at Bangladesh embassy/consulate in your country</li>
        <li>Processing time: 7-14 business days</li>
        <li>Required documents: Passport, photos, application form, invitation letter</li>
      </ul>
      <p class="small">We can provide invitation letters and visa assistance</p>
    </article>
    <article class="card visa">
      <svg class="icon"><use href="#i-map"/></svg>
      <h3>Vietnam Visa</h3>
      <ul class="bullets">
        <li>eVisa available for most nationalities</li>
        <li>30-day tourist visa (extendable)</li>
        <li>Apply online at evisa.xuatnhapcanh.gov.vn</li>
        <li>Processing time: 3-5 business days</li>
      </ul>
      <p class="small">Resort can assist with visa documentation</p>
    </article>
  </div>
  <div class="help">
    <p>Need help with visa applications or have questions?</p>
    <a class="cta">Contact Our Travel Team</a>
  </div>
</section>

<section class="section light tips">
  <h2>Travel Tips</h2>
  <p class="lead">Helpful information to make your trip smooth and enjoyable.</p>
  <div class="grid three">
    <article class="card tip"><svg class="icon"><use href="#i-sun"/></svg><h4>Weather</h4><p>December in Dhaka: Pleasant and cool (15-25°C). Expect dry weather, low humidity, and lots of sunshine. Light sweaters or shawls are recommended for evenings.</p></article>
    <article class="card tip"><svg class="icon"><use href="#i-dollar"/></svg><h4>Currency</h4><p>Bangladesh: Bangladeshi Taka (BDT). Vietnam: Vietnamese Dong (VND). USD widely accepted at hotels.</p></article>
    <article class="card tip"><svg class="icon"><use href="#i-building"/></svg><h4>Health</h4><p>Consult your doctor for recommended vaccinations. Drink bottled water. Travel insurance recommended.</p></article>
    <article class="card tip"><svg class="icon"><use href="#i-cap"/></svg><h4>Culture</h4><p>Respectful dress for religious sites. Remove shoes when entering homes/mosques. Modest attire preferred.</p></article>
    <article class="card tip"><svg class="icon"><use href="#i-megaphone"/></svg><h4>Language</h4><p>Bengali in Bangladesh, Vietnamese in Vietnam. English widely spoken in hotels and tourist areas.</p></article>
    <article class="card tip"><svg class="icon"><use href="#i-mobile"/></svg><h4>Connectivity</h4><p>WiFi available at hotels. Consider local SIM cards for data. International roaming can be expensive.</p></article>
  </div>
</section>

<section class="section support">
  <h2>24/7 Travel Support</h2>
  <p class="lead">Our travel support team is available around the clock to assist you during your journey.</p>
  <article class="card hotline">
    <svg class="icon xl"><use href="#i-phone"/></svg>
    <h4>Emergency Travel Hotline</h4>
    <div class="numbers"><a>Rana: +880 17 9340 3767</a><a>Tahamina: +880 17 9999 7024</a><a>Fazlu: +880 17 1330 2987</a><a>Lalin: +880 17 3001 2090</a></div>
    <p class="small">Available 24/7 for urgent travel assistance</p>
    <a class="more">More Contact Options <span class="arrow">→</span></a>
  </article>
</section>
</main>

<footer class="footer">
  <div class="cols">
    <div class="brand"><h3>Incia &amp; Arvin</h3><p>Thank you for being part of our love story</p><p class="tiny">From childhood friends to forever partners</p></div>
    <div class="links"><h4>Quick Links</h4><div class="pairs"><a>Home</a><a>Events</a><a>Gallery</a><a>RSVP</a><a>Travel</a><a>Contact</a></div></div>
    <div class="touch"><h4>Get in Touch</h4><div class="lines"><span>Rana :+880-1793403767</span><span>Tahamina: +880-1799997024</span><span>Dhaka, Bangladesh</span></div><a class="pill">Contact Us</a></div>
  </div>
  <p class="copy">© 2025 Incia &amp; Arvin's Wedding.</p>
</footer>

<div class="devbadge"><svg viewBox="0 0 36 36"><circle cx="18" cy="18" r="17.5" fill="#2e2e2e" stroke="#4a4a4a"/><defs><linearGradient id="nfade" x1="0" y1="0" x2="0" y2="1"><stop offset=".4" stop-color="#fff"/><stop offset="1" stop-color="#fff" stop-opacity=".1"/></linearGradient></defs><path d="M13.2 24V12.3L22.8 24.6" fill="none" stroke="#fff" stroke-width="1.5"/><rect x="22" y="12" width="1.5" height="10.5" fill="url(#nfade)"/></svg></div>
</body>
</html>
```
FILE: styles.css
```css
*{box-sizing:border-box;margin:0;padding:0}
html{font-size:9.3958px;background:#8b5a3c}
body{
  position:relative;
  font:400 1.6rem/2.4rem Inter,"Liberation Sans",sans-serif;
  letter-spacing:.008em;
  color:#6b7280;
  background:#fefcf7;
}
ul{list-style:none}
.sprite{display:none}
h1,h2,h3,.logo{font-family:"Playfair Display","Liberation Serif",serif;color:#8b5a3c;font-weight:600;letter-spacing:-.006em}

.topbar{height:7.3rem;padding:0 3.2rem;background:#fff;border-bottom:1px solid #1f1f1f;display:flex;align-items:center;justify-content:space-between}
.logo{font-size:2rem;letter-spacing:0}
.nav{display:flex;gap:3.2rem}
.nav a{position:relative;padding:.8rem 1.2rem;font-size:1.4rem;line-height:2rem;font-weight:500;letter-spacing:.025em}
.nav .active{color:#d4a574}
.nav .active::after{content:"";position:absolute;left:1.2rem;right:1.2rem;bottom:-.2rem;height:.2rem;background:#d4a574}

.hero{display:flex;flex-direction:column;align-items:center;padding-top:2.1rem}
.hero h1{font-size:6rem;line-height:6.6rem;font-weight:400;letter-spacing:.003em}
.hero .rule{width:9.6rem;height:.4rem;background:#d4a574;margin-top:2rem}
.hero p{font-size:2rem;line-height:3.2rem;margin-top:3.2rem;letter-spacing:.005em}

.section{padding:6.4rem 3.2rem;background:#fefdf8}
.section.light{background:#fffefb}
.section.stays{background:none;padding-top:6.5rem}
.section>h2{font-size:3.6rem;line-height:4rem;text-align:center}
.section>h2.sm{font-size:3rem;line-height:3.6rem}
.lead{text-align:center;margin:2.4rem 0 4.8rem}
.grid{display:grid;gap:2.4rem}
.two{grid-template-columns:1fr 1fr;gap:3.2rem}
.three{grid-template-columns:repeat(3,1fr)}
.wide-gap{gap:3.2rem}
.card{background:#fff;border-radius:1.2rem;padding:3.2rem;display:flex;flex-direction:column;align-items:center;box-shadow:0 1.9rem 2.4rem -.5rem rgba(0,0,0,.1),0 .8rem 1rem -.6rem rgba(0,0,0,.1)}
.card h3{font-size:2.4rem;line-height:3.2rem}
.small{font-size:1.4rem;line-height:2rem;letter-spacing:-.005em}
.icon{width:4rem;height:4rem;fill:none;stroke:#d4a574;stroke-width:1.5;stroke-linecap:round;stroke-linejoin:round;flex:none}
.icon.lg{width:4.8rem;height:4.8rem}
.icon.xl{width:5.6rem;height:5.6rem}
.mini{width:2rem;height:2rem;fill:none;stroke:#d4a574;stroke-width:1.5;stroke-linecap:round;stroke-linejoin:round}

.hotel h3{margin-top:1.2rem}
.hotel .small{margin-top:.4rem}
.facts{margin:2.4rem 0;display:flex;flex-direction:column;align-items:center;gap:1.2rem}
.facts li{display:flex;align-items:center;gap:.8rem;letter-spacing:.015em}
.map{position:relative;width:100%;height:24rem;border:1px solid #1f1f1f;border-radius:1.2rem;overflow:hidden;background:#faf8f8}
.tiles{display:block;width:100%;height:100%}
.chips{display:flex;gap:.8rem;margin-top:1.2rem}
.chips a{height:3rem;border:1px solid #d4a574;border-radius:1.5rem;padding:0 1.2rem;font-size:1.2rem;line-height:2.75rem;font-weight:500;color:#d4a574;letter-spacing:.025em}
.note{margin-top:4rem}
.note p{margin-top:.8rem;letter-spacing:.005em}

/* map drawing */
.street{fill:none;stroke:#d3dbf0;stroke-width:2.6}
.street.thick{stroke-width:6}
.road{fill:none;stroke:#d8dff0;stroke-width:13;stroke-linejoin:round}
.road.wide{stroke-width:22}
.highway{fill:none;stroke:#8fa3dd;stroke-width:54}
.highway-line{fill:none;stroke:#5c6fae;stroke-width:5}
.district{fill:#fbf7d4}
.park{fill:#acf8de}
.peach{fill:#ffebe0}
.water{fill:#83dfff}
.creek{fill:none;stroke:#83dfff;stroke-width:9}
.trail{fill:none;stroke:#6fd3c4;stroke-width:2}
.lb{font-family:Roboto,"Noto Sans Bengali","Noto Sans",sans-serif;stroke:#fff;stroke-width:6;paint-order:stroke;stroke-linejoin:round;letter-spacing:normal}
.blue{fill:#3873f0}.navy{fill:#2b3b6e;font-weight:500}.slate{fill:#5a6a8c}.gray{fill:#64809a}.dark{fill:#3c4257}
.bold{font-weight:500}.orange{fill:#e07b00}.pink{fill:#d84be0}.magenta{fill:#ef1ea9}.red{fill:#dc2408}.sky{fill:#2493cf}
.thin{opacity:.85}
.google{font:600 46px "Open Sans",Roboto,sans-serif;stroke:#fff;stroke-width:4;paint-order:stroke;letter-spacing:0}
.place{position:absolute;left:1rem;top:1rem;width:29.2rem;height:5.3rem;padding:.9rem 1.2rem;background:#fff;border-radius:.2rem;box-shadow:0 1px .4rem rgba(0,0,0,.3);font-family:Roboto,sans-serif;display:flex;flex-direction:column}
.place b{font-size:1.4rem;line-height:1.8rem;font-weight:500;color:#000;letter-spacing:.03em}
.place span{font-size:1.2rem;line-height:1.6rem;color:#3367e0;letter-spacing:.03em}
.place .boxes{font:.9rem/1.7rem "DejaVu Sans",sans-serif;letter-spacing:-.1em}
.sat{position:absolute;left:1rem;bottom:1rem;width:4.2rem;height:4.2rem;border:.2rem solid #fff;border-radius:.3rem;box-shadow:0 1px .4rem rgba(0,0,0,.3)}
.zoomer{position:absolute;right:1rem;bottom:2.3rem;width:4rem;height:8.1rem;background:#fff;border-radius:.2rem;box-shadow:0 1px .4rem rgba(0,0,0,.25);display:grid;grid-template-rows:1fr 1fr;place-items:center}
.zoomer i{width:1.7rem;height:1.7rem;background:linear-gradient(#666,#666) center/1.7rem 2px no-repeat,linear-gradient(#666,#666) center/2px 1.7rem no-repeat}
.zoomer .minus{width:3rem;height:4rem;border-top:1px solid #e6e6e6;background:linear-gradient(#666,#666) center/1.7rem 2px no-repeat}
.legal{position:absolute;right:0;bottom:0;height:1.4rem;padding:0 .6rem 0 .5rem;display:flex;gap:1.2rem;background:rgba(245,245,245,.7);font:1rem/1.4rem Roboto,sans-serif;color:#111;letter-spacing:.02em;white-space:nowrap}
.legal.boxes{font-size:.8rem;letter-spacing:-.04em}
.legal em{font-style:normal;font-size:1rem;letter-spacing:.02em;margin-left:.2rem}

.route h3{margin-top:1.6rem}
.visa h3{margin-top:1.2rem}
.bullets{align-self:stretch;margin-top:2.4rem;display:flex;flex-direction:column;gap:1.2rem}
.bullets li{position:relative;min-height:2.8rem;padding-left:2.1rem;line-height:2.6rem}
.bullets li::before{content:"";position:absolute;left:.2rem;top:1.5rem;width:.5rem;height:.5rem;border-radius:50%;background:#d4a574}
.visa .small{margin-top:2.4rem}
.help{margin-top:3.2rem;text-align:center;display:flex;flex-direction:column;align-items:center}
.cta{margin:1.4rem 0 -1rem;height:4.4rem;padding:0 3.2rem;line-height:4.4rem;border-radius:2.2rem;background:#d4a574;color:#fff;font-weight:500;letter-spacing:0;box-shadow:0 1rem 1.5rem -.3rem rgba(0,0,0,.1),0 .4rem .6rem -.4rem rgba(0,0,0,.1)}

.tip{text-align:center}
.tip h4{margin-top:1.2rem;font-size:1.6rem;line-height:2.4rem;font-weight:600;color:#1f1f1f;letter-spacing:0}
.tip p{margin-top:1.6rem;font-size:1.4rem;line-height:2.275rem;letter-spacing:-.005em}

.support{background:linear-gradient(135deg,#faf1ea 0%,#fdf6ea 50%,#faf2ec 100%)}
.support .lead{margin-bottom:3.3rem}
.hotline h4{margin-top:1.6rem;font-size:2rem;line-height:2.8rem;font-weight:600;color:#1f1f1f;letter-spacing:.004em}
.numbers{margin-top:1.2rem;display:flex;flex-direction:column;align-items:center;gap:.4rem;font-size:2rem;line-height:2.8rem;font-weight:500;color:#d4a574;letter-spacing:-.003em}
.hotline .small{margin-top:2.4rem}
.more{margin-top:2.4rem;font-weight:500;color:#d4a574;letter-spacing:0}
.arrow{font:400 1.1rem/1 "Liberation Serif",serif;margin-left:.1rem}

.footer{background:#8b5a3c;color:#fff;padding:4.8rem 3.2rem 4.7rem}
.cols{display:grid;grid-template-columns:repeat(3,1fr);gap:3.2rem;height:19.3rem;border-bottom:1px solid #fff}
.brand h3{font-size:3rem;line-height:3.6rem;font-weight:400;color:#fff;letter-spacing:0}
.brand p{margin-top:1.6rem;letter-spacing:.018em}
.brand .tiny{font-size:1.4rem;line-height:2rem;letter-spacing:.004em}
.footer h4{font-size:1.8rem;line-height:2.8rem;font-weight:600;letter-spacing:.01em}
.links{text-align:center}
.pairs{margin-top:1.6rem;display:grid;grid-template-columns:1fr 1fr;gap:.8rem;font-size:1.4rem;line-height:2rem;letter-spacing:0}
.touch{display:flex;flex-direction:column;align-items:flex-end}
.lines{margin-top:1.6rem;display:flex;flex-direction:column;align-items:flex-end;gap:.8rem;font-size:1.4rem;line-height:2rem;letter-spacing:.002em}
.pill{margin-top:1.2rem;padding:0 1.6rem;font-size:1.4rem;line-height:3.2rem;border-radius:1.7rem;background:#d4a574}
.copy{margin-top:3.2rem;text-align:center;font-size:1.4rem;line-height:2rem;letter-spacing:0}

.devbadge{position:absolute;left:2rem;top:102.4rem;width:3.6rem;height:3.6rem;border-radius:50%;box-shadow:0 .8rem 2rem rgba(0,0,0,.12)}
.devbadge svg{display:block;width:3.6rem;height:3.6rem}
```
